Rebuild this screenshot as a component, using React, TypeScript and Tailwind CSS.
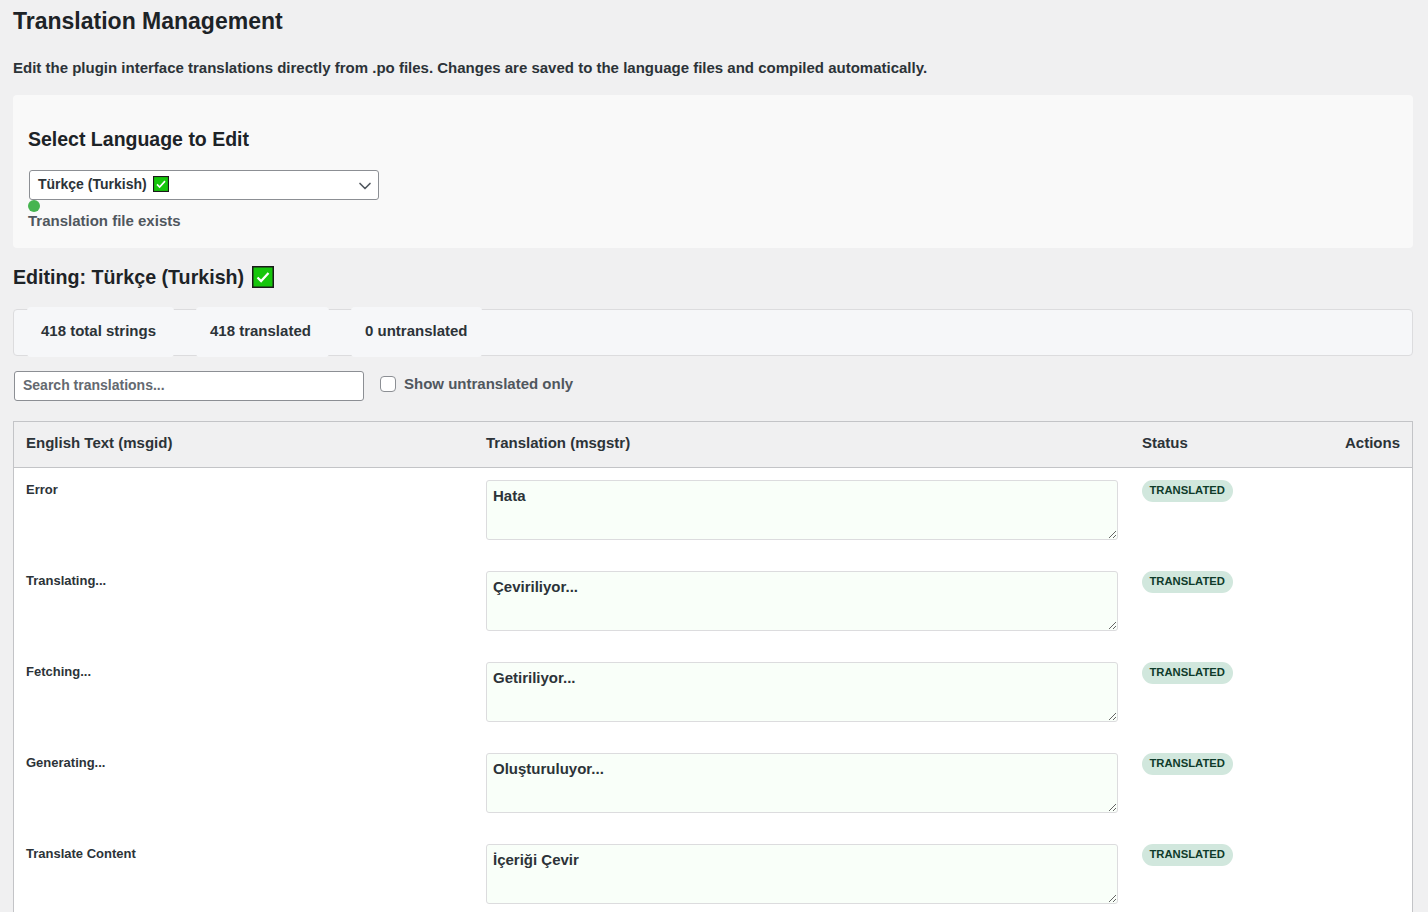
import { ChevronDown } from "lucide-react";

const rows = [
  { id: "Error", str: "Hata" },
  { id: "Translating...", str: "Çeviriliyor..." },
  { id: "Fetching...", str: "Getiriliyor..." },
  { id: "Generating...", str: "Oluşturuluyor..." },
  { id: "Translate Content", str: "İçeriği Çevir" },
];

function CheckEmoji({ size }: { size: number }) {
  return (
    <svg width={size} height={size} viewBox="0 0 22 22" className="inline-block shrink-0">
      <rect x="0.75" y="0.75" width="20.5" height="20.5" fill="#16c60c" stroke="#1a1a1a" strokeWidth="1.5" />
      <path d="M5.5 11.5l3.6 3.6 7.4-8" fill="none" stroke="#ffffff" strokeWidth="2.2" />
    </svg>
  );
}

export default function App() {
  return (
    <div className="h-screen overflow-hidden bg-[#f0f0f1] pl-[13px] pr-[15px] font-['Liberation_Sans',sans-serif] font-semibold text-[#2c3338]">
      <h1 className="pt-[7px] text-[23px] leading-[29px] text-[#1d2327]">Translation Management</h1>
      <p className="mt-[22px] text-[15px] leading-[20px]">
        Edit the plugin interface translations directly from .po files. Changes are saved to the language files and compiled automatically.
      </p>

      <section className="mt-[17px] h-[153px] rounded bg-[#f9f9f9] px-[15px] pt-[31px]">
        <h2 className="text-[19.5px] leading-[26px] text-[#1d2327]">Select Language to Edit</h2>
        <div className="ml-px mt-[18px] flex h-[30px] w-[350px] items-center justify-between rounded-[3px] border border-[#8c8f94] bg-white pl-2 pr-[3px] text-sm text-[#2c3338]">
          <span className="flex items-center gap-[6px] pb-[2px]">
            Türkçe (Turkish) <CheckEmoji size={16} />
          </span>
          <ChevronDown size={20} strokeWidth={2} className="mt-px text-[#50575e]" />
        </div>
        <div className="h-3 w-3 rounded-full bg-[#46b450]" />
        <p className="text-[15px] leading-[18px] text-[#50575e]">Translation file exists</p>
      </section>

      <h2 className="mt-[16px] flex items-center gap-2 text-[19.66px] leading-[26px] text-[#1d2327]">
        Editing: Türkçe (Turkish) <CheckEmoji size={22} />
      </h2>

      <div className="mt-[19px] flex h-[47px] gap-[22px] rounded border border-[#dcdcde] bg-[#f6f7f9] pl-[13px]">
        <div className="-mt-[3px] -mb-[2px] flex w-[147px] items-center rounded bg-[#f6f7f9] pb-[2px] pl-[14px] text-[15px]">418 total strings</div>
        <div className="-mt-[3px] -mb-[2px] flex w-[133px] items-center rounded bg-[#f6f7f9] pb-[2px] pl-[14px] text-[15px]">418 translated</div>
        <div className="-mt-[3px] -mb-[2px] flex w-[131px] items-center rounded bg-[#f6f7f9] pb-[2px] pl-[14px] text-[15px]">0 untranslated</div>
      </div>

      <div className="mt-[15px] flex items-start">
        <input
          readOnly
          placeholder="Search translations..."
          className="ml-px h-[30px] w-[350px] rounded-[3px] border border-[#8c8f94] bg-white px-2 pb-[2px] text-sm font-semibold text-[#2c3338] outline-none placeholder:text-[#646970]"
        />
        <label className="ml-[16px] flex items-center gap-2 pt-[3px] text-[15px] leading-[20px] text-[#50575e]">
          <span className="h-4 w-4 rounded-[4px] border border-[#8c8f94] bg-white" />
          Show untranslated only
        </label>
      </div>

      <table className="mt-[20px] w-full table-fixed border-collapse border border-[#c3c4c7] bg-white text-left">
        <colgroup>
          <col className="w-[460px]" />
          <col className="w-[656px]" />
          <col />
          <col className="w-[80px]" />
        </colgroup>
        <thead>
          <tr className="h-[46px] border-b border-[#c3c4c7] bg-[#f0f0f1] text-[15px] text-[#2c3338]">
            <th className="pb-[2px] pl-3 font-semibold">English Text (msgid)</th>
            <th className="pb-[2px] pl-[12.5px] font-semibold">Translation (msgstr)</th>
            <th className="pb-[2px] pl-[12.5px] font-semibold">Status</th>
            <th className="pb-[2px] pr-3 text-right font-semibold">Actions</th>
          </tr>
        </thead>
        <tbody>
          {rows.map((r) => (
            <tr key={r.id} className="align-top">
              <td className="pl-3 pt-3 text-[13px] leading-[20px] text-[#2c3338]">{r.id}</td>
              <td className="pl-3 pr-3 pb-[19px] pt-3">
                <textarea
                  readOnly
                  defaultValue={r.str}
                  className="block h-[60px] w-full rounded-[3px] border border-[#dcdcde] bg-[#f9fff9] px-[6.5px] py-[5px] text-[15px] font-semibold leading-[20px] text-[#2c3338] outline-none"
                />
              </td>
              <td className="pl-3 pt-3">
                <span className="block h-[22px] w-fit rounded-[11px] bg-[#d1e7dd] px-2 text-[11.25px] leading-[20px] text-[#0f3b2a]">
                  TRANSLATED
                </span>
              </td>
              <td />
            </tr>
          ))}
        </tbody>
      </table>
    </div>
  );
}
